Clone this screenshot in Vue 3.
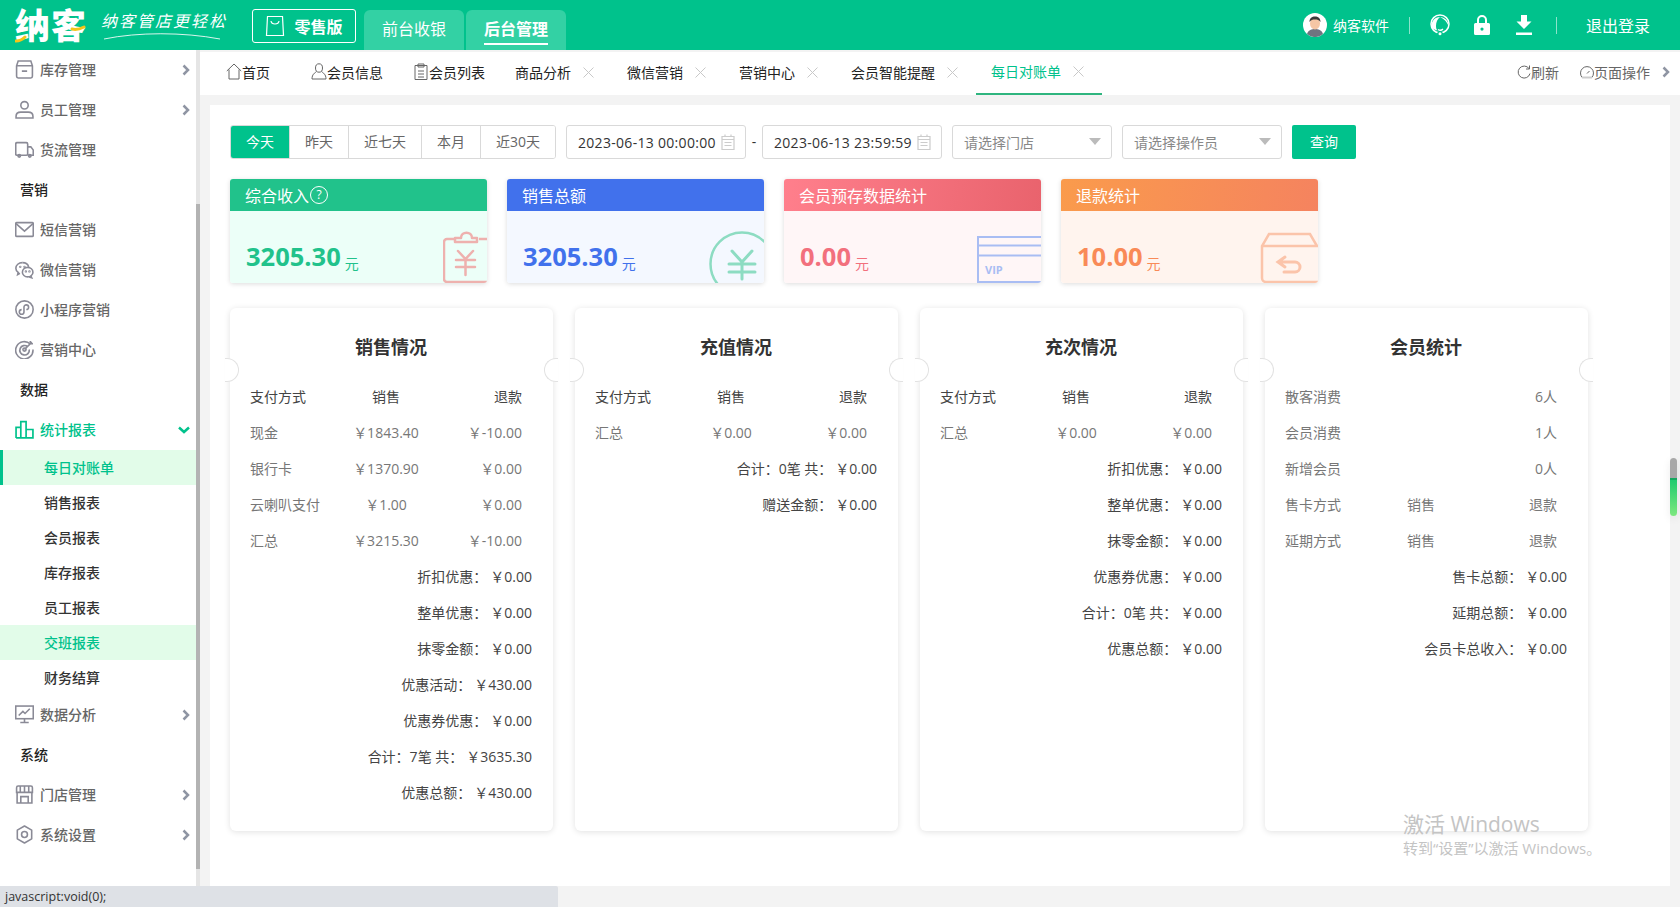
<script setup>
const menu = [
  { label: '库存管理', icon: 'box', arrow: true },
  { label: '员工管理', icon: 'user', arrow: true },
  { label: '货流管理', icon: 'truck' },
  { section: '营销' },
  { label: '短信营销', icon: 'mail' },
  { label: '微信营销', icon: 'wechat' },
  { label: '小程序营销', icon: 'mini' },
  { label: '营销中心', icon: 'target' },
  { section: '数据' },
  {
    label: '统计报表',
    icon: 'chart',
    open: true,
    children: [
      { label: '每日对账单', current: true },
      { label: '销售报表' },
      { label: '会员报表' },
      { label: '库存报表' },
      { label: '员工报表' },
      { label: '交班报表', hover: true },
      { label: '财务结算' },
    ],
  },
  { label: '数据分析', icon: 'monitor', arrow: true },
  { section: '系统' },
  { label: '门店管理', icon: 'store', arrow: true },
  { label: '系统设置', icon: 'gear', arrow: true },
]

const pageTabs = [
  { label: '首页', icon: 'home', cls: 'tab-home' },
  { label: '会员信息', icon: 'member' },
  { label: '会员列表', icon: 'list' },
  { label: '商品分析', close: true },
  { label: '微信营销', close: true },
  { label: '营销中心', close: true },
  { label: '会员智能提醒', close: true },
  { label: '每日对账单', close: true, active: true },
]

const quickDates = ['今天', '昨天', '近七天', '本月', '近30天']

const summaryCards = [
  { title: '综合收入', value: '3205.30', type: 'income', help: true },
  { title: '销售总额', value: '3205.30', type: 'sales' },
  { title: '会员预存数据统计', value: '0.00', type: 'deposit' },
  { title: '退款统计', value: '10.00', type: 'refund' },
]

const head = ['支付方式', '销售', '退款']

const panels = [
  {
    title: '销售情况',
    rows: [
      { cols: head, head: true },
      { cols: ['现金', '￥1843.40', '￥-10.00'] },
      { cols: ['银行卡', '￥1370.90', '￥0.00'] },
      { cols: ['云喇叭支付', '￥1.00', '￥0.00'] },
      { cols: ['汇总', '￥3215.30', '￥-10.00'] },
    ],
    totals: [
      ['折扣优惠：', '￥0.00'],
      ['整单优惠：', '￥0.00'],
      ['抹零金额：', '￥0.00'],
      ['优惠活动：', '￥430.00'],
      ['优惠券优惠：', '￥0.00'],
      ['合计：7笔 共：', '￥3635.30'],
      ['优惠总额：', '￥430.00'],
    ],
  },
  {
    title: '充值情况',
    rows: [
      { cols: head, head: true },
      { cols: ['汇总', '￥0.00', '￥0.00'] },
    ],
    totals: [
      ['合计：0笔 共：', '￥0.00'],
      ['赠送金额：', '￥0.00'],
    ],
  },
  {
    title: '充次情况',
    rows: [
      { cols: head, head: true },
      { cols: ['汇总', '￥0.00', '￥0.00'] },
    ],
    totals: [
      ['折扣优惠：', '￥0.00'],
      ['整单优惠：', '￥0.00'],
      ['抹零金额：', '￥0.00'],
      ['优惠券优惠：', '￥0.00'],
      ['合计：0笔 共：', '￥0.00'],
      ['优惠总额：', '￥0.00'],
    ],
  },
  {
    title: '会员统计',
    rows: [
      { cols: ['散客消费', '', '6人'] },
      { cols: ['会员消费', '', '1人'] },
      { cols: ['新增会员', '', '0人'] },
      { cols: ['售卡方式', '销售', '退款'] },
      { cols: ['延期方式', '销售', '退款'] },
    ],
    totals: [
      ['售卡总额：', '￥0.00'],
      ['延期总额：', '￥0.00'],
      ['会员卡总收入：', '￥0.00'],
    ],
  },
]
</script>

<template>
  <div class="app">
    <header class="topbar">
      <div class="logo">
        <span class="logo-text">纳客</span>
        <svg class="logo-accent" width="72" height="20" viewBox="0 0 72 20" fill="none">
          <path d="M1 17c3 0 6-1 9-4" stroke="#f5c518" stroke-width="3" stroke-linecap="round" />
          <path d="M57 5c4 1 8 0 12-2" stroke="#f5c518" stroke-width="3" stroke-linecap="round" />
        </svg>
      </div>
      <div class="slogan">
        <span class="slogan-text">纳客管店更轻松</span>
        <svg class="slogan-line" width="118" height="8" viewBox="0 0 118 8" fill="none">
          <path d="M1 7C35 0 80 0 117 7" stroke="#d9f5ec" stroke-width="1" />
        </svg>
      </div>
      <button class="edition" type="button">
        <svg width="20" height="22" viewBox="0 0 20 22" fill="none" stroke="#fff" stroke-width="1.2">
          <path d="M2.500 1.500h15l1 19h-17z" />
          <path d="M6 6c.5 4 7.500 4 8 0" />
        </svg>
        零售版
      </button>
      <nav class="mode-tabs">
        <a class="mode-tab">前台收银</a>
        <a class="mode-tab current"><span>后台管理</span></a>
      </nav>
      <div class="top-right">
        <svg class="avatar" width="24" height="24" viewBox="0 0 24 24">
          <circle cx="12" cy="12" r="12" fill="#fff" />
          <path d="M4 21c1-4 5-5 8-5s7 1 8 5a12 12 0 0 1-16 0z" fill="#6f7480" />
          <ellipse cx="12" cy="10.500" rx="5" ry="6" fill="#f5c6a5" />
          <path d="M6.500 9c0-4 2.500-5.500 5.500-5.500S17.500 5 17.500 9c-1.500-2-3-2.500-5.500-2.500S8 7 6.500 9z" fill="#3a3a3a" />
        </svg>
        <span class="user-name">纳客软件</span>
        <i class="top-divider"></i>
        <svg class="top-icon" width="20" height="22" viewBox="0 0 20 22" fill="none">
          <circle cx="10" cy="10" r="9" stroke="#fff" stroke-width="1.500" />
          <path d="M1.500 13C1 7 5 3 10 3c-2.500 2-4 5-4 9 0 2 .5 3.500 1.500 4.500-2.500-.5-5-1.500-6-3.500z" fill="#fff" />
          <path d="M10 3c4.500 0 8.500 3.500 8.500 9-1.500-4-4-7-8.500-9z" fill="#fff" />
          <path d="M8 15.500c1.500 1 3.500 1 5-.5" stroke="#fff" stroke-width="1.300" />
          <rect x="7" y="18" width="6" height="3" rx="1.500" fill="#00c28c" />
          <circle cx="10" cy="19.800" r="1.500" fill="#fff" />
        </svg>
        <svg class="top-icon lock" width="16" height="20" viewBox="0 0 16 20">
          <path d="M4 8V5a4 4 0 0 1 8 0v3" fill="none" stroke="#fff" stroke-width="2" />
          <path fill-rule="evenodd" d="M1.500 8h13A1.500 1.500 0 0 1 16 9.500v9a1.500 1.500 0 0 1-1.500 1.500h-13A1.500 1.500 0 0 1 0 18.500v-9A1.500 1.500 0 0 1 1.500 8zM8 12.500a1.600 1.600 0 1 0 0 3.200 1.600 1.600 0 0 0 0-3.200z" fill="#fff" />
        </svg>
        <svg class="top-icon download" width="16" height="20" viewBox="0 0 16 20">
          <path d="M5 0h6v6.500h4.500L8 14 .5 6.500H5z" fill="#fff" />
          <rect y="17.500" width="16" height="2.500" fill="#fff" />
        </svg>
        <i class="top-divider second"></i>
        <a class="logout">退出登录</a>
      </div>
    </header>

    <div class="body">
      <aside class="sidebar">
        <template v-for="item in menu" :key="item.label || item.section">
          <div v-if="item.section" class="menu-section">{{ item.section }}</div>
          <template v-else>
            <a class="menu-item" :class="{ open: item.open }">
              <svg class="menu-icon" viewBox="0 0 18 18" fill="none" stroke="currentColor" stroke-width="1.500">
                <template v-if="item.icon === 'box'">
                  <path d="M3 1h12l1.500 4.500v10a1.500 1.500 0 0 1-1.500 1.500H3a1.500 1.500 0 0 1-1.500-1.500v-10z" />
                  <path d="M1.500 5.500h15M6.500 10.500h5" />
                </template>
                <template v-else-if="item.icon === 'user'">
                  <circle cx="9" cy="5" r="3.500" />
                  <path d="M1 17v-1.500C1 13 3 11.500 5.500 11.500h7c2.500 0 4.500 1.500 4.500 4V17z" />
                </template>
                <template v-else-if="item.icon === 'truck'">
                  <rect x=".7" y="2.500" width="11.300" height="12" rx="1.200" />
                  <path d="M12 6.500h3l2.300 3v5H12" />
                  <circle cx="4" cy="15" r="1.200" />
                  <circle cx="14" cy="15" r="1.200" />
                </template>
                <template v-else-if="item.icon === 'mail'">
                  <rect x=".7" y="2.500" width="16.600" height="13" rx="1" />
                  <path d="M1 3.500l8 7 8-7" />
                </template>
                <template v-else-if="item.icon === 'wechat'">
                  <path d="M7 2.500C3.500 2.500.8 4.800.8 7.800c0 1.600.8 3 2.200 4l-.5 2 2.200-1.200" />
                  <path d="M7 2.500c3 0 5.400 1.700 6 4" />
                  <ellipse cx="12" cy="11.500" rx="5" ry="4.500" />
                  <path d="M15 15l.8 1.800L13.500 16" />
                  <circle cx="5" cy="6.500" r=".4" />
                  <circle cx="9" cy="6.500" r=".4" />
                  <circle cx="10.300" cy="10.800" r=".4" />
                  <circle cx="13.700" cy="10.800" r=".4" />
                </template>
                <template v-else-if="item.icon === 'mini'">
                  <circle cx="9" cy="9" r="8.200" />
                  <path d="M8.500 6.800v4.500a2.200 2.200 0 1 1-2.200-2.200M8.500 6.800a2.200 2.200 0 1 1 2.200 2.200" />
                </template>
                <template v-else-if="item.icon === 'target'">
                  <path d="M14.500 3.800A8.200 8.200 0 1 0 17 9" />
                  <path d="M12 6.300A4.500 4.500 0 1 0 13.500 9" stroke-width="1.600" />
                  <circle cx="9" cy="9" r="1.500" />
                  <path d="M9 9l7-7M14.500 1v2.500H17" />
                </template>
                <template v-else-if="item.icon === 'chart'">
                  <path d="M1 17V7h4.500v10M5.500 17V1.500h5V17M10.500 17V9H17v8zM1 17h16" stroke-width="1.600" />
                </template>
                <template v-else-if="item.icon === 'monitor'">
                  <rect x=".7" y="1" width="16.600" height="12" />
                  <path d="M3.500 10l4-4 2 2 4.500-4.500M5 16.500h8M9 13v3.500" />
                </template>
                <template v-else-if="item.icon === 'store'">
                  <path d="M2 7v10h14V7" />
                  <path d="M1.500 7V2.500A1.500 1.500 0 0 1 3 1h12a1.500 1.500 0 0 1 1.500 1.500V7zM5 1v6M9 1v6M13 1v6" />
                  <path d="M5.500 17v-6h7v6" />
                </template>
                <template v-else-if="item.icon === 'gear'">
                  <path d="M9 1l6.800 3.900v8.200L9 17l-6.800-3.900V4.900z" stroke-linejoin="round" />
                  <circle cx="9" cy="9" r="2.800" />
                </template>
              </svg>
              <span class="menu-label">{{ item.label }}</span>
              <svg v-if="item.arrow" class="menu-chevron" width="8" height="12" viewBox="0 0 8 12" fill="none">
                <path d="M1.500 1.500L6 6l-4.500 4.500" stroke="#8f95a3" stroke-width="2.500" />
              </svg>
              <svg v-if="item.open" class="menu-chevron down" width="12" height="8" viewBox="0 0 12 8" fill="none">
                <path d="M1 1.500L6 6l5-4.500" stroke="#00c28c" stroke-width="2.500" />
              </svg>
            </a>
            <a
              v-for="child in item.children"
              :key="child.label"
              class="menu-child"
              :class="{ current: child.current, hover: child.hover }"
            >{{ child.label }}</a>
          </template>
        </template>
        <i class="sidebar-thumb"></i>
      </aside>

      <main class="main">
        <div class="tabbar">
          <div class="tab-list">
            <a
              v-for="tab in pageTabs"
              :key="tab.label"
              class="page-tab"
              :class="[tab.cls, { active: tab.active }]"
            >
              <svg v-if="tab.icon" class="tab-icon" width="16" height="17" viewBox="0 0 16 17" fill="none" stroke="#666" stroke-width="1">
                <template v-if="tab.icon === 'home'">
                  <path d="M.8 8L8 1l7.200 7M3 6.500V16h10V6.500" />
                </template>
                <template v-else-if="tab.icon === 'member'">
                  <ellipse cx="8" cy="5" rx="3.500" ry="4.200" />
                  <path d="M5.500 8.500C4 10 1 11 1 16h14c0-5-3-6-4.500-7.500" />
                </template>
                <template v-else>
                  <path d="M2 2.500h12v14H2zM5 1h6v3H5zM5 8h6M5 11h6M5 14h6" />
                </template>
              </svg>
              <span class="tab-text">{{ tab.label }}</span>
              <svg v-if="tab.close" class="tab-close" width="11" height="11" viewBox="0 0 11 11" fill="none">
                <path d="M.5.500l10 10M10.500.500l-10 10" stroke="#c8c8c8" stroke-width="1" />
              </svg>
            </a>
          </div>
          <div class="tab-tools">
            <a class="tool">
              <svg width="14" height="14" viewBox="0 0 14 14" fill="none" stroke="#666" stroke-width="1">
                <path d="M12 3.500A6 6 0 1 0 13 8.500M12.500 .500v3.500H9" />
              </svg>
              刷新
            </a>
            <a class="tool">
              <svg width="14" height="14" viewBox="0 0 14 14" fill="none" stroke="#666" stroke-width="1">
                <path d="M2.200 12.500a6.500 6.500 0 1 1 9.600 0z" />
                <path d="M7 8.500l2.500-2.500" />
                <path d="M2 11.500h10v2H2z" fill="#ccc" stroke="none" />
              </svg>
              页面操作
            </a>
            <svg class="tool-next" width="8" height="12" viewBox="0 0 8 12" fill="none">
              <path d="M1.500 1.500L6 6l-4.500 4.500" stroke="#8f95a3" stroke-width="2.500" />
            </svg>
          </div>
        </div>

        <div class="content">
          <section class="panel">
            <div class="filters">
              <div class="quick-dates">
                <button
                  v-for="(d, i) in quickDates"
                  :key="d"
                  type="button"
                  class="quick"
                  :class="{ active: i === 0 }"
                >{{ d }}</button>
              </div>
              <div class="date-box">
                <span>2023-06-13 00:00:00</span>
                <svg width="14" height="16" viewBox="0 0 14 16" fill="none" stroke="#ccc" stroke-width="1.200">
                  <path d="M1 2.500h12v13H1zM1 5.500h12M3.500 8.500h7M3.500 11.500h7" />
                  <path d="M4 .5v2M10 .5v2" />
                </svg>
              </div>
              <span class="date-dash">-</span>
              <div class="date-box">
                <span>2023-06-13 23:59:59</span>
                <svg width="14" height="16" viewBox="0 0 14 16" fill="none" stroke="#ccc" stroke-width="1.200">
                  <path d="M1 2.500h12v13H1zM1 5.500h12M3.500 8.500h7M3.500 11.500h7" />
                  <path d="M4 .5v2M10 .5v2" />
                </svg>
              </div>
              <div class="select-box">请选择门店<i class="caret"></i></div>
              <div class="select-box">请选择操作员<i class="caret"></i></div>
              <button class="search" type="button">查询</button>
            </div>

            <div class="stat-row">
              <div v-for="card in summaryCards" :key="card.title" class="stat" :class="card.type">
                <div class="stat-head">
                  {{ card.title }}
                  <span v-if="card.help" class="help">?</span>
                </div>
                <div class="stat-body">
                  <strong>{{ card.value }}</strong>
                  <em>元</em>
                  <svg v-if="card.type === 'income'" class="stat-art" width="44" height="52" viewBox="0 0 44 52" fill="none" stroke="#eeb1ae" stroke-width="2.500">
                    <path d="M11 8H4a3 3 0 0 0-3 3v37a3 3 0 0 0 3 3h40M36 8h8" />
                    <path d="M12 11V7h6c0-7 11-7 11 0h5v4z" stroke-linejoin="round" />
                    <path d="M15 20l7.500 8 7.500-8M13 29h19M13 36h19M22.500 28v16" stroke-linecap="round" />
                  </svg>
                  <svg v-else-if="card.type === 'sales'" class="stat-art" width="55" height="52" viewBox="0 0 55 52" fill="none" stroke="#8ddcc2" stroke-width="2.500">
                    <circle cx="33" cy="33" r="31.500" />
                    <path d="M23 20l10 11 10-11M20 33h26M20 41h26M33 31v17" stroke-width="3" stroke-linecap="round" />
                  </svg>
                  <svg v-else-if="card.type === 'deposit'" class="stat-art" width="64" height="47" viewBox="0 0 64 47" fill="none" stroke="#a9bdf3" stroke-width="2">
                    <path d="M64 1H1v45h63M1 9.500h63M1 19.500h63" />
                    <text x="8" y="38" class="vip-text">VIP</text>
                  </svg>
                  <svg v-else class="stat-art" width="58" height="51" viewBox="0 0 58 51" fill="none" stroke="#fbc4aa" stroke-width="2.500">
                    <path d="M58 50H6a4 4 0 0 1-4-4V14L9 2h41l7 12M2 14h56" />
                    <path d="M25 25l-7 5 7 5M18 30h17a5 5 0 0 1 0 10H24" stroke-width="3" stroke-linecap="round" />
                  </svg>
                </div>
              </div>
            </div>

            <div class="report-row">
              <article v-for="panel in panels" :key="panel.title" class="report">
                <i class="notch left"></i>
                <i class="notch right"></i>
                <h3>{{ panel.title }}</h3>
                <div
                  v-for="(row, i) in panel.rows"
                  :key="i"
                  class="report-line"
                  :class="{ head: row.head }"
                >
                  <span>{{ row.cols[0] }}</span>
                  <span class="mid">{{ row.cols[1] }}</span>
                  <span class="end">{{ row.cols[2] }}</span>
                </div>
                <div v-for="t in panel.totals" :key="t[0]" class="report-total">
                  <span>{{ t[0] }}</span>
                  <span>{{ t[1] }}</span>
                </div>
              </article>
            </div>

            <div class="activate">
              <p class="activate-title">激活 Windows</p>
              <p class="activate-sub">转到“设置”以激活 Windows。</p>
            </div>
          </section>
          <i class="page-thumb"></i>
        </div>
      </main>
    </div>

    <footer class="statusbar">
      <span class="status-link">javascript:void(0);</span>
    </footer>
  </div>
</template>

<style>
html,
body {
  margin: 0;
  padding: 0;
  overflow: hidden;
}
</style>

<style scoped>
.app {
  display: flex;
  flex-direction: column;
  width: 1680px;
  height: 907px;
  overflow: hidden;
  background: #f3f3f3;
  font-family: "Open Sans", "Noto Sans CJK SC", sans-serif;
  font-size: 14px;
  color: #333;
}

/* top bar */
.topbar {
  display: flex;
  align-items: flex-start;
  flex: none;
  height: 50px;
  background: #00c28c;
  color: #fff;
}

.logo {
  position: relative;
  width: 72px;
  margin: 8px 0 0 15px;
}

.logo-text {
  font-size: 35px;
  line-height: 36px;
  font-weight: 900;
  letter-spacing: 1px;
  color: #fff;
}

.logo-accent {
  position: absolute;
  left: 0;
  top: 16px;
}

.slogan {
  position: relative;
  width: 126px;
  margin: 11px 0 0 14px;
}

.slogan-text {
  display: block;
  font-size: 16px;
  line-height: 21px;
  font-style: italic;
  letter-spacing: 2px;
  white-space: nowrap;
}

.slogan-line {
  position: absolute;
  left: 2px;
  top: 21px;
}

.edition {
  display: flex;
  align-items: center;
  justify-content: center;
  gap: 9px;
  width: 104px;
  height: 34px;
  margin: 9px 0 0 25px;
  padding: 0;
  border: 1px solid #fff;
  border-radius: 3px;
  background: transparent;
  color: #fff;
  font: 700 16px "Noto Sans CJK SC", sans-serif;
}

.mode-tabs {
  display: flex;
  gap: 2px;
  margin: 10px 0 0 8px;
}

.mode-tab {
  display: flex;
  justify-content: center;
  width: 100px;
  height: 40px;
  padding-top: 6px;
  box-sizing: border-box;
  border-radius: 6px 6px 0 0;
  background: #33d1a4;
  font-size: 16px;
  line-height: 27px;
}

.mode-tab.current {
  font-weight: 700;
}

.mode-tab.current span {
  height: 27px;
  border-bottom: 2px solid #fff;
}

.top-right {
  display: flex;
  align-items: center;
  height: 50px;
  margin-left: auto;
  padding-right: 30px;
}

.user-name {
  margin-left: 6px;
}

.top-divider {
  width: 1px;
  height: 17px;
  margin: 0 20px;
  background: rgba(255, 255, 255, 0.55);
}

.top-divider.second {
  margin: 0 29px 0 24px;
}

.lock {
  margin-left: 24px;
}

.download {
  margin-left: 26px;
}

.logout {
  font-size: 16px;
}

/* sidebar */
.body {
  display: flex;
  flex: 1;
  min-height: 0;
}

.sidebar {
  position: relative;
  flex: none;
  width: 196px;
  background: #fff;
  border-right: 4px solid #e5e5e5;
}

.menu-item {
  display: flex;
  align-items: center;
  box-sizing: border-box;
  height: 40px;
  padding: 0 0 2px 15px;
  color: #666;
  font-weight: 500;
}

.menu-item.open {
  color: #00c28c;
}

.menu-icon {
  flex: none;
  width: 19px;
  height: 19px;
  color: #8a8a96;
}

.menu-item.open .menu-icon {
  color: #00c28c;
}

.menu-label {
  margin-left: 6px;
}

.menu-chevron {
  margin-left: auto;
  margin-right: 6px;
  margin-top: 2px;
}

.menu-section {
  height: 40px;
  padding-left: 20px;
  color: #222;
  font-weight: 500;
  line-height: 40px;
}

.menu-child {
  display: block;
  height: 35px;
  padding-left: 44px;
  color: #333;
  font-weight: 500;
  line-height: 35px;
}

.menu-child.hover {
  background: #e2fce9;
  color: #00c28c;
}

.menu-child.current {
  padding-left: 41px;
  border-left: 3px solid #00c28c;
  background: #e2fce9;
  color: #00c28c;
}

.sidebar-thumb {
  position: absolute;
  top: 154px;
  right: -4px;
  width: 4px;
  height: 665px;
  background: #b3b3b3;
}

/* tabs */
.main {
  display: flex;
  flex: 1;
  flex-direction: column;
  min-width: 0;
}

.tabbar {
  display: flex;
  align-items: center;
  justify-content: space-between;
  flex: none;
  height: 43px;
  margin-top: 2px;
  background: #fff;
  color: #222;
}

.tab-list {
  display: flex;
  height: 100%;
  padding-left: 11px;
}

.page-tab {
  display: flex;
  align-items: center;
  box-sizing: border-box;
  height: 100%;
  padding: 0 18px 2px 15px;
  border-bottom: 2px solid transparent;
  white-space: nowrap;
  color: #222;
}

.page-tab .tab-close {
  margin: 2px 0 0 12px;
}

.page-tab:not(:has(.tab-close)) {
  padding-right: 15px;
}

.tab-home {
  margin-right: 11px;
}

.page-tab.active {
  padding-bottom: 4px;
  border-bottom-color: #2fb57f;
  color: #00c28c;
}

.tab-tools {
  display: flex;
  align-items: center;
  padding: 0 10px 3px 0;
  color: #666;
}

.tool {
  display: flex;
  align-items: center;
  margin-right: 21px;
}

.tool:nth-child(2) {
  margin-right: 12px;
}

/* content */
.content {
  position: relative;
  flex: 1;
  min-height: 0;
  padding: 10px 10px 0;
}

.panel {
  position: relative;
  box-sizing: border-box;
  height: 100%;
  padding: 20px 0 0 21px;
  background: #fff;
}

.page-thumb {
  position: absolute;
  top: 363px;
  right: 3px;
  width: 7px;
  height: 58px;
  border-radius: 4px;
  background: linear-gradient(#a8a8a8 0 20px, #15a85f 20px 22px, #1fcb6e 22px, #7ee87f);
  box-shadow: 0 3px 8px rgba(0, 0, 0, 0.08);
}

.filters {
  display: flex;
  align-items: stretch;
  height: 34px;
  margin-left: -1px;
}

.quick-dates {
  display: flex;
  box-sizing: border-box;
  margin-right: 10px;
  border: 1px solid #d9d9d9;
  border-radius: 3px;
  overflow: hidden;
}

.quick {
  width: 59px;
  padding: 0 0 2px;
  border: 0;
  border-left: 1px solid #d9d9d9;
  background: #fff;
  color: #666;
  font: inherit;
}

.quick:first-child {
  width: 58px;
  border-left: 0;
}

.quick:nth-child(3) {
  width: 73px;
}

.quick:nth-child(5) {
  width: 75px;
}

.quick.active {
  background: #00c28c;
  color: #fff;
}

.date-box {
  display: flex;
  align-items: center;
  justify-content: space-between;
  box-sizing: border-box;
  width: 180px;
  padding: 0 10px 0 11px;
  border: 1px solid #d9d9d9;
  border-radius: 3px;
  color: #333;
  letter-spacing: 0.3px;
  white-space: nowrap;
}

.date-dash {
  width: 16px;
  color: #333;
  line-height: 34px;
  text-align: center;
}

.select-box {
  position: relative;
  box-sizing: border-box;
  width: 160px;
  margin-left: 10px;
  padding-left: 11px;
  border: 1px solid #d9d9d9;
  border-radius: 3px;
  color: #888;
  line-height: 34px;
}

.caret {
  position: absolute;
  top: 12px;
  right: 10px;
  border-top: 7px solid #bbb;
  border-right: 6px solid transparent;
  border-left: 6px solid transparent;
}

.search {
  width: 64px;
  margin-left: 10px;
  padding: 0 0 2px;
  border: 0;
  border-radius: 2px;
  background: #00c28c;
  color: #fff;
  font: inherit;
}

/* summary cards */
.stat-row {
  display: flex;
  gap: 20px;
  margin: 20px 0 0 -1px;
}

.stat {
  width: 257px;
  height: 104px;
  border-radius: 3px;
  box-shadow: 0 1px 5px rgba(0, 0, 0, 0.14);
  overflow: hidden;
}

.stat-head {
  display: flex;
  align-items: center;
  height: 32px;
  padding-left: 15px;
  color: #fff;
  font-size: 16px;
}

.help {
  box-sizing: border-box;
  width: 18px;
  height: 18px;
  margin-left: 1px;
  border: 1px solid #fff;
  border-radius: 50%;
  font-size: 12px;
  line-height: 16px;
  text-align: center;
}

.stat-body {
  position: relative;
  display: flex;
  align-items: baseline;
  box-sizing: border-box;
  height: 72px;
  padding: 27px 0 0 16px;
}

.stat-body strong {
  font-size: 25.5px;
  font-weight: 700;
  line-height: 36px;
}

.stat-body em {
  position: relative;
  top: 3px;
  margin-left: 4px;
  font-size: 14px;
  font-style: normal;
}

.stat-art {
  position: absolute;
  right: 0;
  bottom: 0;
}

.vip-text {
  fill: #a9bdf3;
  stroke: none;
  font-size: 11px;
  font-weight: 700;
}

.income .stat-head {
  background: #21c28b;
}

.income .stat-body {
  background: #ecfff8;
  color: #21c28b;
}

.sales .stat-head {
  background: #4171ec;
}

.sales .stat-body {
  background: #f4f8ff;
  color: #4171ec;
}

.deposit .stat-head {
  background: linear-gradient(100deg, #ff7f8c, #e9636d);
}

.deposit .stat-body {
  background: #fff6f7;
  color: #f2707d;
}

.refund .stat-head {
  background: linear-gradient(100deg, #fa9b4c, #f5835f);
}

.refund .stat-body {
  background: #fff4ee;
  color: #f98a57;
}

/* report cards */
.report-row {
  display: flex;
  gap: 22px;
  margin: 25px 0 0 -1px;
}

.report {
  position: relative;
  box-sizing: border-box;
  width: 323px;
  height: 523px;
  padding: 21px 21px 0 20px;
  border-radius: 6px;
  background: #fff;
  box-shadow: 0 1px 6px rgba(0, 0, 0, 0.12);
}

.report h3 {
  height: 36px;
  margin: 0 0 14px;
  color: #333;
  font-size: 18px;
  font-weight: 700;
  line-height: 36px;
  text-align: center;
}

.notch {
  position: absolute;
  top: 50px;
  box-sizing: border-box;
  width: 14px;
  height: 24px;
  border: 1px solid #e2e2e2;
  background: #fff;
}

.notch.left {
  left: -5px;
  border-left: 0;
  border-radius: 0 12px 12px 0;
}

.notch.right {
  right: -5px;
  border-right: 0;
  border-radius: 12px 0 0 12px;
}

.report-line {
  display: grid;
  grid-template-columns: 1fr 1fr 1fr;
  height: 36px;
  padding-right: 10px;
  color: #777;
  line-height: 36px;
}

.report-line.head {
  color: #444;
}

.report-line .mid {
  text-align: center;
}

.report-line .end {
  text-align: right;
}

.report-total {
  display: flex;
  justify-content: flex-end;
  gap: 3px;
  height: 36px;
  color: #444;
  line-height: 36px;
}

/* windows watermark */
.activate {
  position: absolute;
  top: 706px;
  left: 1193px;
  color: #c4c4c4;
  pointer-events: none;
}

.activate p {
  margin: 0;
  white-space: nowrap;
}

.activate-title {
  font-size: 21px;
  line-height: 27px;
}

.activate-sub {
  font-size: 15px;
  line-height: 20px;
}

/* status */
.statusbar {
  flex: none;
  height: 21px;
}

.status-link {
  display: block;
  box-sizing: border-box;
  width: 558px;
  height: 21px;
  padding-left: 5px;
  background: #dee1e6;
  border-top-right-radius: 2px;
  color: #333;
  font-size: 12.500px;
  line-height: 21px;
}
</style>
